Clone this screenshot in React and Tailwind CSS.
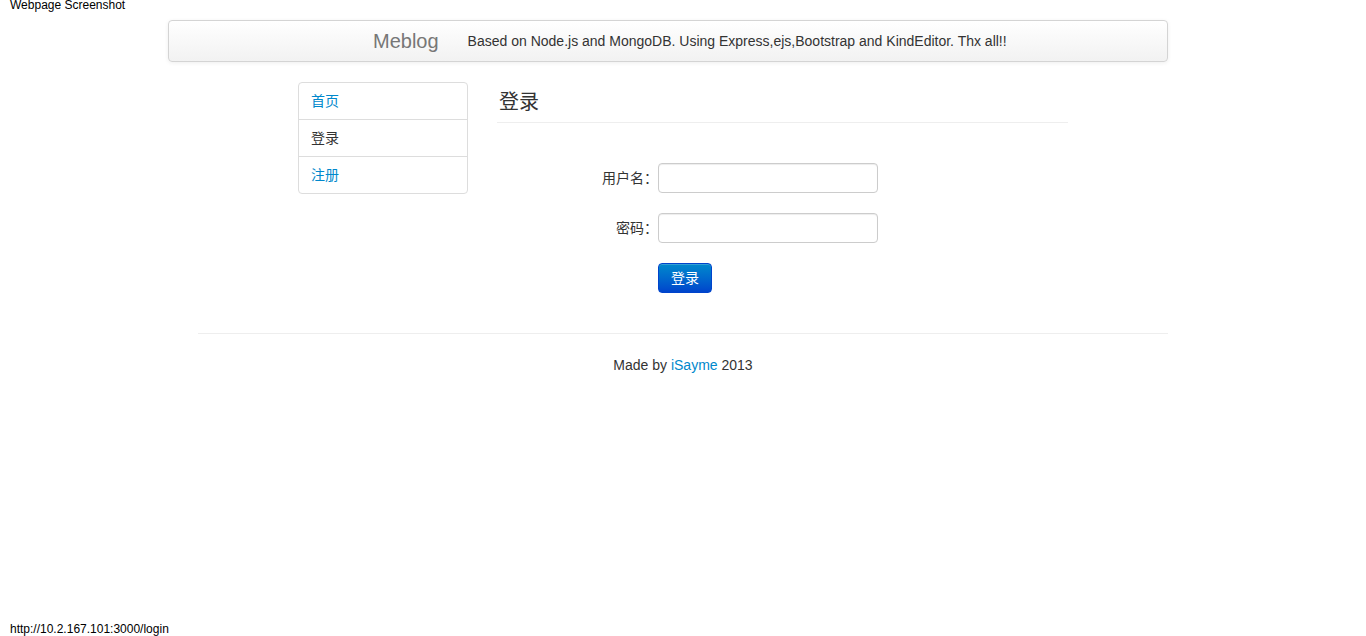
const font = { fontFamily: '"Liberation Sans", Arial, "Noto Sans CJK SC", sans-serif' }

export default function App() {
  return (
    <div
      className="flex h-[636px] flex-col bg-white text-[14px] text-[#333]"
      style={font}
    >
      {/* capture label */}
      <div className="pl-[10px] text-[12px] leading-[10px] text-black">Webpage Screenshot</div>

      {/* navbar */}
      <div className="ml-[168px] mt-[10px] flex h-[42px] w-[1000px] items-center rounded-[4px] border border-[#d4d4d4] bg-gradient-to-b from-white to-[#f2f2f2] pl-[204px] shadow-[0_1px_4px_rgba(0,0,0,0.065)]">
        <span className="text-[20px] leading-[20px] text-[#777]">Meblog</span>
        <span className="ml-[29px] leading-[20px] text-[#333]">
          Based on Node.js and MongoDB. Using Express,ejs,Bootstrap and KindEditor. Thx all!!
        </span>
      </div>

      {/* content */}
      <div className="mx-auto mt-[20px] flex w-[770px]">
        <div className="w-[170px] self-start">
          <ul className="rounded-[4px] border border-[#ddd]">
            <li className="flex h-[36px] items-center pl-[12px] text-[#0088cc]">首页</li>
            <li className="flex h-[37px] items-center border-t border-[#ddd] pl-[12px] text-[#333]">登录</li>
            <li className="flex h-[37px] items-center border-t border-[#ddd] pl-[12px] text-[#0088cc]">注册</li>
          </ul>
        </div>

        <div className="ml-[29px] w-[571px]">
          <h2 className="h-[41px] border-b border-[#eee] pl-[2px] text-[20px] leading-[40px] font-normal text-[#333]">登录</h2>

          <form className="mt-[40px] flex flex-col gap-[20px]" onSubmit={(e) => e.preventDefault()}>
            <div className="flex items-center">
              <label className="w-[161px] text-right">用户名：</label>
              <input className="h-[30px] w-[220px] rounded-[4px] border border-[#ccc] px-[6px] shadow-[inset_0_1px_1px_rgba(0,0,0,0.075)] outline-none" />
            </div>
            <div className="flex items-center">
              <label className="w-[161px] text-right">密码：</label>
              <input
                type="password"
                className="h-[30px] w-[220px] rounded-[4px] border border-[#ccc] px-[6px] shadow-[inset_0_1px_1px_rgba(0,0,0,0.075)] outline-none"
              />
            </div>
            <div className="flex pl-[161px]">
              <button
                type="submit"
                className="h-[30px] w-[54px] rounded-[4px] border border-[#0044cc] bg-gradient-to-b from-[#0088cc] to-[#0044cc] text-[14px] text-white shadow-[inset_0_1px_0_rgba(255,255,255,0.2)]"
              >
                登录
              </button>
            </div>
          </form>
        </div>
      </div>

      {/* footer */}
      <div className="mx-auto mt-[40px] w-[970px] border-t border-[#eee] pt-[21px] text-center leading-[20px]">
        Made by <span className="text-[#0088cc]">iSayme</span> 2013
      </div>

      {/* status bar */}
      <div className="mt-auto pl-[10px] text-[12px] leading-[14px] text-black">http://10.2.167.101:3000/login</div>
    </div>
  )
}
